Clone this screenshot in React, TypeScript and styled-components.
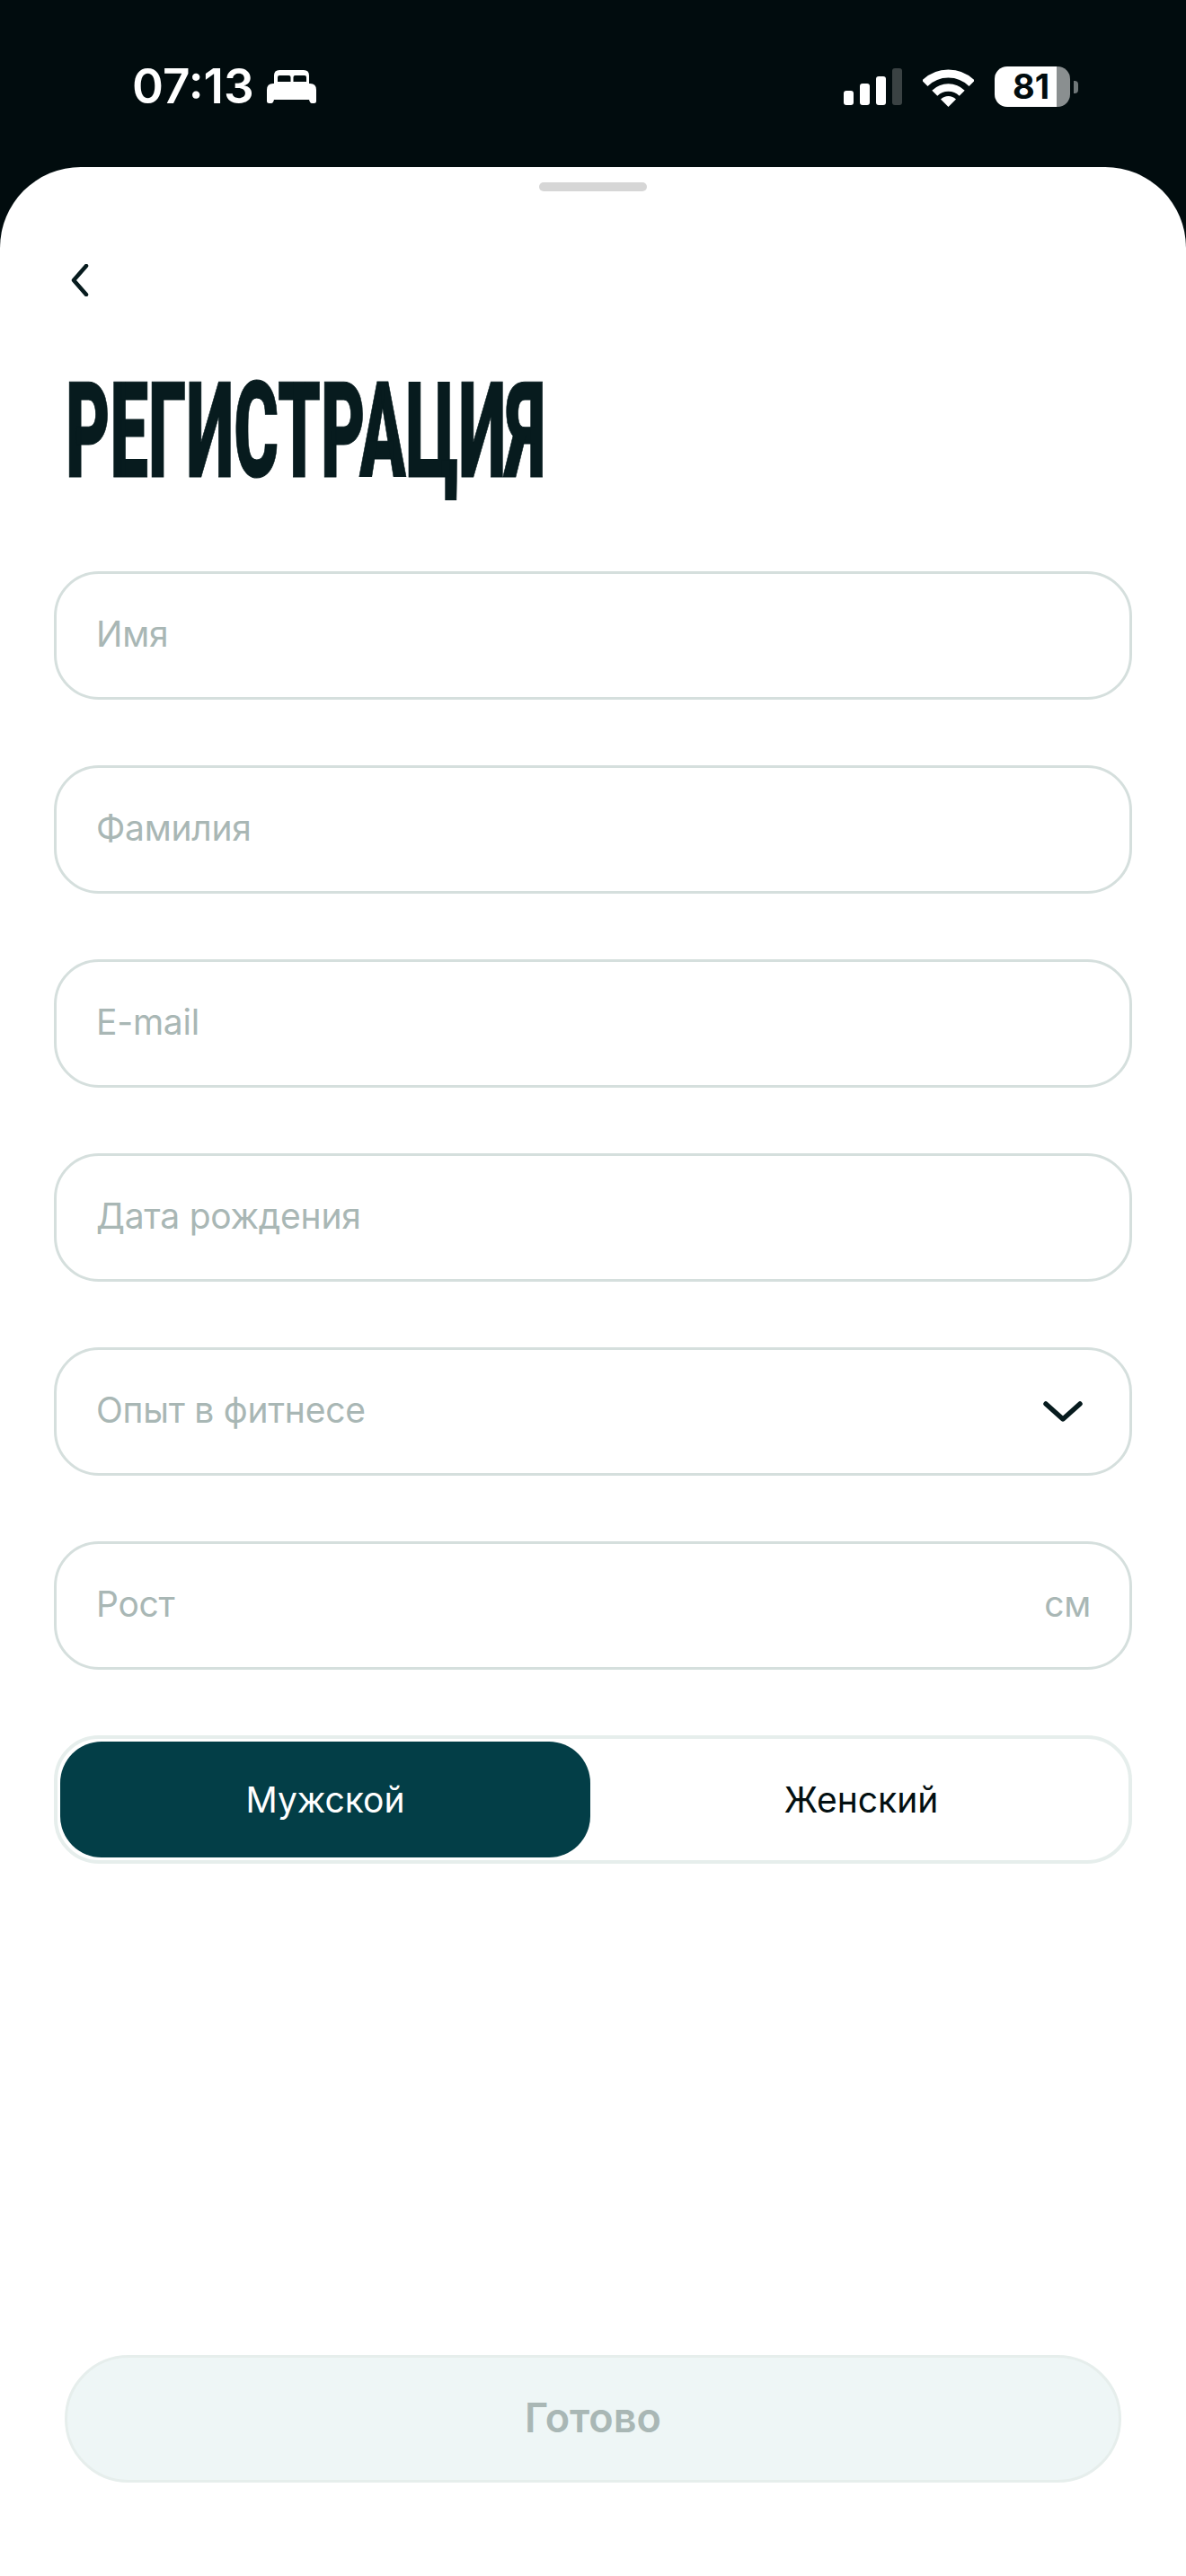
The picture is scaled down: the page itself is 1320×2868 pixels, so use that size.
import { FC } from "react";
import styled, { createGlobalStyle } from "styled-components";

const GlobalStyle = createGlobalStyle`
  html, body {
    margin: 0;
    padding: 0;
    background: #010c0e;
  }

  * {
    box-sizing: border-box;
  }
`;

const fields = ["Имя", "Фамилия", "E-mail", "Дата рождения"];

const BedIcon: FC = () => (
  <svg width="55" height="37" viewBox="0 0 55 37" fill="#fff">
    <path
      fillRule="evenodd"
      d="M8 16V6Q8 0 14 0H41Q47 0 47 6V16ZM12 13H26.5V8Q26.5 6 24.5 6H14Q12 6 12 8ZM29.5 13H44V8Q44 6 42 6H31.5Q29.5 6 29.5 8Z"
    />
    <path d="M0 22Q0 15 7 15H48Q55 15 55 22V35Q55 37 52.5 37H50Q48 37 47 33H8Q7 37 5 37H2.5Q0 37 0 35Z" />
  </svg>
);

const WifiIcon: FC = () => (
  <svg width="57" height="42" viewBox="0 0 57 42" fill="none" stroke="#fff">
    <path strokeWidth="9" d="M2.3 15.8A37 37 0 0 1 54.7 15.8" />
    <path strokeWidth="8.5" d="M13.3 26.8A21.5 21.5 0 0 1 43.7 26.8" />
    <path fill="#fff" stroke="none" d="M28.5 42L20 33.5A12 12 0 0 1 37 33.5Z" />
  </svg>
);

const BackIcon: FC = () => (
  <svg width="22" height="36" viewBox="0 0 22 36" fill="none">
    <path d="M18 2L4 18L18 34" stroke="#071b1e" strokeWidth="4.5" strokeLinecap="round" strokeLinejoin="round" />
  </svg>
);

const ChevronDown: FC = () => (
  <ChevronWrap>
    <svg width="44" height="24" viewBox="0 0 44 24" fill="none">
      <path d="M3 3L22 20L41 3" stroke="#071b1e" strokeWidth="5.5" strokeLinecap="round" strokeLinejoin="round" />
    </svg>
  </ChevronWrap>
);

const App: FC = () => {
  return (
    <Screen>
      <GlobalStyle />
      <StatusBar>
        <StatusLeft>
          <Time>07:13</Time>
          <BedIcon />
        </StatusLeft>
        <StatusRight>
          <Signal>
            <SignalBar $height={16} />
            <SignalBar $height={24} />
            <SignalBar $height={32} />
            <SignalBar $height={41} $dim />
          </Signal>
          <WifiIcon />
          <Battery>
            <BatteryBody>81</BatteryBody>
            <BatteryNub />
          </Battery>
        </StatusRight>
      </StatusBar>
      <Sheet>
        <Grabber />
        <BackButton>
          <BackIcon />
        </BackButton>
        <TitleRow>
          <Title>РЕГИСТРАЦИЯ</Title>
        </TitleRow>
        <Form>
          {fields.map((label) => (
            <Field key={label}>
              <Placeholder>{label}</Placeholder>
            </Field>
          ))}
          <Field>
            <Placeholder>Опыт в фитнесе</Placeholder>
            <ChevronDown />
          </Field>
          <Field>
            <Placeholder>Рост</Placeholder>
            <Placeholder>см</Placeholder>
          </Field>
          <Segment>
            <SegmentItem $active>Мужской</SegmentItem>
            <SegmentItem>Женский</SegmentItem>
          </Segment>
        </Form>
        <DoneButton>Готово</DoneButton>
      </Sheet>
    </Screen>
  );
};

const Screen = styled.div`
  display: flex;
  flex-direction: column;
  width: 1320px;
  height: 2868px;
  overflow: hidden;
  background: #010c0e;
  font-family: Inter, "Noto Sans", sans-serif;
`;

const StatusBar = styled.div`
  display: flex;
  justify-content: space-between;
  align-items: flex-start;
  height: 186px;
  padding: 74px 120px 0 147px;
`;

const StatusLeft = styled.div`
  display: flex;
  align-items: center;
  gap: 14px;
  height: 45px;
`;

const Time = styled.span`
  color: #fff;
  font-size: 53px;
  font-weight: 600;
  line-height: 45px;
`;

const StatusRight = styled.div`
  display: flex;
  align-items: flex-end;
  height: 45px;
`;

const Signal = styled.div`
  display: flex;
  align-items: flex-end;
  gap: 7px;
  margin-right: 23px;
  margin-bottom: 2px;
`;

const SignalBar = styled.div<{ $height: number; $dim?: boolean }>`
  width: 11px;
  height: ${(p) => p.$height}px;
  border-radius: 3px;
  background: ${(p) => (p.$dim ? "#3a4243" : "#fff")};
`;

const Battery = styled.div`
  display: flex;
  align-items: center;
  gap: 4px;
  margin-left: 23px;
`;

const BatteryBody = styled.div`
  width: 84px;
  height: 45px;
  padding-left: 20px;
  border-radius: 14px;
  background: linear-gradient(to right, #fff 69px, #8a8f90 69px);
  color: #010c0e;
  font-size: 38px;
  font-weight: 700;
  line-height: 45px;
`;

const BatteryNub = styled.div`
  width: 5px;
  height: 14px;
  border-radius: 0 4px 4px 0;
  background: #6f7778;
`;

const Sheet = styled.div`
  display: flex;
  flex-direction: column;
  flex: 1;
  padding: 17px 60px 104px;
  border-radius: 90px 90px 0 0;
  background: #fff;
`;

const Grabber = styled.div`
  align-self: center;
  width: 120px;
  height: 10px;
  border-radius: 5px;
  background: #d6d6d6;
`;

const BackButton = styled.div`
  display: flex;
  height: 36px;
  margin: 81px 0 0 18px;
`;

const TitleRow = styled.div`
  height: 150px;
  margin: 76px 0 0 13px;
`;

const Title = styled.h1`
  margin: 0;
  color: #071b1e;
  font-family: Roboto, "Liberation Sans", sans-serif;
  font-size: 148px;
  font-weight: 900;
  line-height: 150px;
  white-space: nowrap;
  -webkit-text-stroke: 1px #071b1e;
  transform: scaleX(0.514);
  transform-origin: left center;
`;

const Form = styled.div`
  display: flex;
  flex-direction: column;
  gap: 73px;
  margin-top: 80px;
`;

const Field = styled.div`
  display: flex;
  justify-content: space-between;
  align-items: center;
  height: 143px;
  padding: 0 43px 5px 44px;
  border: 3px solid #d5dfdd;
  border-radius: 50px;
`;

const Placeholder = styled.span`
  color: #a9b7b5;
  font-size: 39px;
  font-weight: 400;
  letter-spacing: -0.25px;
`;

const ChevronWrap = styled.div`
  display: flex;
  margin: 5px 9px 0 0;
`;

const Segment = styled.div`
  display: grid;
  grid-template-columns: 590px 1fr;
  height: 143px;
  padding: 3px;
  border: 4px solid #e6eeec;
  border-radius: 50px;
`;

const SegmentItem = styled.div<{ $active?: boolean }>`
  display: flex;
  justify-content: center;
  align-items: center;
  padding-left: ${(p) => (p.$active ? "0" : "7px")};
  border-radius: 46px;
  background: ${(p) => (p.$active ? "#033e47" : "transparent")};
  color: ${(p) => (p.$active ? "#fff" : "#030f11")};
  font-size: 39px;
  font-weight: 400;
`;

const DoneButton = styled.div`
  display: flex;
  justify-content: center;
  align-items: center;
  width: 1176px;
  height: 142px;
  margin: auto 0 0 12px;
  padding-bottom: 3px;
  border: 3px solid #e6eeec;
  border-radius: 71px;
  background: #eef6f6;
  color: #a9b7b5;
  font-size: 45px;
  font-weight: 600;
`;

export default App;
